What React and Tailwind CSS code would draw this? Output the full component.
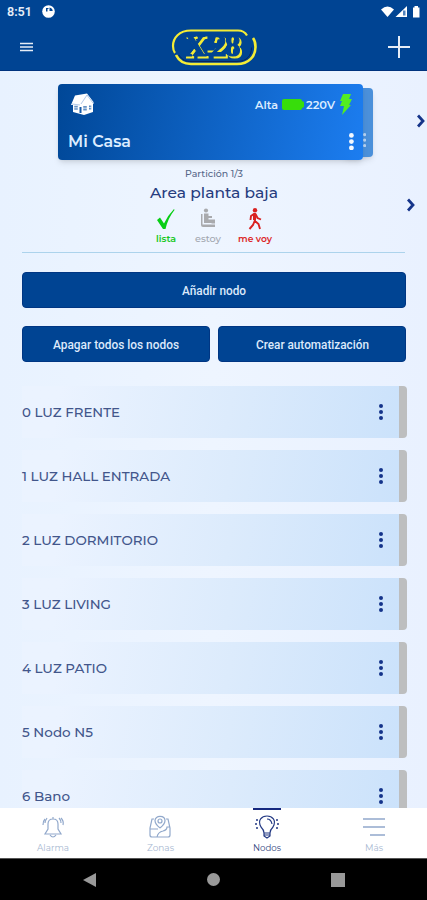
import React from 'react';

const NODES = ['0 LUZ FRENTE', '1 LUZ HALL ENTRADA', '2 LUZ DORMITORIO', '3 LUZ LIVING', '4 LUZ PATIO', '5 Nodo N5', '6 Bano'];
const WIDTHS = [98, 148, 136, 89, 85, 71, 48];

function Label({ width, size, children, weight = 500, color = '#2f4784', className = '', font = "Montserrat, Inter, sans-serif" }) {
  return (
    <svg width={width} height={size * 1.5} className={`block shrink-0 overflow-visible ${className}`}>
      <text x="0" y={size * 1.1} textLength={width} lengthAdjust="spacingAndGlyphs" fontSize={size} fontWeight={weight} fill={color} fontFamily={font}>{children}</text>
    </svg>
  );
}

function Dots({ color, r = 2, gap = 6 }) {
  return (
    <svg width={r * 2} height={gap * 2 + r * 2} fill={color} className="shrink-0">
      <circle cx={r} cy={r} r={r} />
      <circle cx={r} cy={r + gap} r={r} />
      <circle cx={r} cy={r + gap * 2} r={r} />
    </svg>
  );
}

function Logo() {
  return (
    <svg width="86" height="40" viewBox="0 0 86 40" fill="none">
      <path d="M76 8.500C74 5 71 3.500 67 3.500H20C8 3.500 2 11 2 19c0 3 .5 5 2 7" stroke="#f4ec35" strokeWidth="2.200" />
      <path d="M5 28c3 6 8 9 15 9h46c12 0 18.500-8 18.500-17 0-4-1-7-2.500-9" stroke="#f4ec35" strokeWidth="2.600" />
      <path d="M8 28c3 5 7 6.500 12 6.500h46c10 0 14.500-6 14.500-14" stroke="#07255f" strokeWidth="1" />
      <text x="13 34 40 54" y="29" fontFamily="Liberation Serif, serif" fontSize="31" fontWeight="700" fill="#004493" stroke="#004493" strokeWidth="1.200" className="drop-shadow-[2.5px_2px_0_#f4ec35]">X-28</text>
    </svg>
  );
}

function Header() {
  return (
    <header className="h-[71px] shrink-0 border-b border-[#00337e] bg-[#004493]">
      <div className="flex h-6 items-center pl-[7px] pr-[6px]">
        <Label width={25} size={12} weight={600} color="#e6edf7" font="Roboto, sans-serif">8:51</Label>
        <svg width="13" height="13" viewBox="0 0 13 13" className="ml-[10px] -mt-px">
          <circle cx="6.500" cy="6.500" r="6.300" fill="#fff" />
          <path d="M4 3h2.500v1H5.500v2.500H4zM7.500 2.500c2 .3 3.200 1.800 3.200 3.500H7.500z" fill="#004493" />
        </svg>
        <svg width="40" height="14" viewBox="0 0 40 14" fill="#fff" className="ml-auto">
          <path d="M0 4.500Q6.500-1.500 13 4.500L6.500 12z" />
          <path d="M14.500 12 26 1v11z" /><path d="M22 5.500h2.500v5H22z" fill="#5283bd" />
          <path d="M32 2.500h1.500V1H37v1.500h1.500V12.500H32z" />
        </svg>
      </div>
      <div className="flex h-[45px] items-center">
        <svg width="13" height="11" className="ml-5 mt-[2px]" stroke="#e6edf7" strokeWidth="1.600"><path d="M0 1.500h13M0 5h13M0 8.500h13" /></svg>
        <div className="ml-[138px]"><Logo /></div>
        <svg width="22" height="22" className="ml-[131px]" stroke="#e6edf7" strokeWidth="2"><path d="M0 11h22M11 0v22" /></svg>
      </div>
    </header>
  );
}

function House() {
  return (
    <svg width="23" height="22" viewBox="0 0 23 22" className="overflow-visible">
      <path d="M4 2.500 16 .5 22.500 9v2H22v8l-9 3-11-3v-7H0z" fill="#fff" />
      <path d="m10 11 6-9 6 8M1 11l8 1" stroke="#8fb2de" strokeWidth=".7" fill="none" />
      <path d="M3.500 12.800h3v4h-3zM8.500 14h2v6h-2zM12.500 13h3v4.500h-3zM18 12.500h2.200v4H18z" fill="#1459a7" />
      <path d="M5 12v5M3 14.800h4M14 13v5M12 15.200h4M19.100 12v5M17.500 14.500h3" stroke="#fff" strokeWidth=".7" />
    </svg>
  );
}

function HouseCard() {
  return (
    <div className="relative ml-[58px] mt-[13px] flex h-[76px] w-[315px] shrink-0">
      <div className="absolute right-0 top-[4px] flex h-[69px] w-[30px] items-end justify-end rounded-[4px] bg-[#4b90da] pb-[10px] pr-[7px] shadow-md"><Dots color="#b7d3f3" r={1.6} gap={5.5} /></div>
      <div className="relative flex h-[76px] w-[305px] flex-col rounded-[4px] bg-linear-[100deg] from-[#004797] to-[#1c7df0] shadow-md">
        <div className="flex h-[40px] items-center pl-[13px] pr-[10px]">
          <House />
          <Label width={23} size={11.5} weight={600} color="#dcecff" className="ml-[161px] mt-[2px]">Alta</Label>
          <svg width="23" height="11" viewBox="0 0 23 11" className="ml-[4px] mt-[1px]" fill="#37dd0b"><path d="M2 0h16q2 0 2 2l2 1v5l-2 1q0 2-2 2H2Q0 11 0 9V2q0-2 2-2" /></svg>
          <Label width={29} size={11.5} weight={600} color="#dcecff" className="ml-[1px] mt-[2px]">220V</Label>
          <svg width="14" height="22" viewBox="0 0 14 22" className="ml-[4px]" fill="#53ed23"><path d="M4 1h8l-2 5h3l-3 6h2L3 22l2-9H1l2-5H1z" /></svg>
        </div>
        <div className="flex items-center justify-between pl-[10px] pr-[9px] pt-[5px]">
          <Label width={63} size={16.5} weight={600} color="#dcecff">Mi Casa</Label>
          <Dots color="#f3f8ff" r={2.4} gap={6.2} />
        </div>
      </div>
      <svg width="8" height="14" className="absolute left-[359px] top-[30px]" fill="none" stroke="#15348a" strokeWidth="2.800"><path d="m1 1.500 5 5.500-5 5.500" /></svg>
    </div>
  );
}

function Partition() {
  return (
    <section className="mx-[22px] mt-[7px] flex h-[86px] shrink-0 flex-col items-center border-b border-[#acd3ec]">
      <Label width={58} size={9.5} color="#576889">Partición 1/3</Label>
      <div className="flex h-[22px] w-full items-start justify-center">
        <Label width={128} size={15.5} weight={500} color="#263c7e">Area planta baja</Label>
      </div>
      <div className="mt-[5px] flex w-full pl-[134px]">
        <div className="flex w-[20px] flex-col items-center">
          <svg width="18" height="22" viewBox="0 0 18 22" fill="#08ce15"><path d="m0 12 3-2.500 4 6Q11 7 17 1l.500 1Q11 10 8.500 21H6z" /></svg>
          <Label width={20} size={9.5} weight={600} color="#16c91d" className="mt-[2px]">lista</Label>
        </div>
        <div className="ml-[19px] flex w-[26px] flex-col items-center">
          <svg width="16" height="22" viewBox="0 0 16 22" fill="#a9aaad"><circle cx="6" cy="2.500" r="2.100" /><path d="M1 6h1.500v10.500H15V19H3q-2 0-2-2zM4 5.500h4.500V8H12v2H8.500v1.500H15v4h-3.500V15H4z" /></svg>
          <Label width={26} size={9.5} weight={500} color="#a2a7af" className="mt-[2px]">estoy</Label>
        </div>
        <div className="ml-[17px] flex w-[34px] flex-col items-center">
          <svg width="16" height="22" viewBox="0 0 16 22" fill="none" stroke="#d92120" strokeWidth="1.900"><circle cx="8" cy="2.200" r="2.200" fill="#d92120" stroke="none" /><path d="M8 5v8l3.500 3 1.500 5M8 12l-2 5-3.500 4M7.500 5.500 4 8l-.5 4M8.500 6l2 4 3.500 1.500" /><path d="M7.500 6v6" strokeWidth="3" /></svg>
          <Label width={34} size={9.5} weight={600} color="#dc2727" className="mt-[2px]">me voy</Label>
        </div>
      </div>
      <svg width="8" height="14" className="absolute left-[407px] top-[198px]" fill="none" stroke="#15348a" strokeWidth="2.800"><path d="m1 1.500 5 5.500-5 5.500" /></svg>
    </section>
  );
}

function ActionButton({ children, width }) {
  return <button className="flex h-[36px] flex-1 items-center justify-center rounded-[4px] border border-[#003683] bg-[#004493]"><Label width={width} size={12} weight={500} color="#dce9fb" font="Roboto, sans-serif" className="mt-px">{children}</Label></button>;
}

function NavItem({ label, width, active, children }) {
  return (
    <div className="flex flex-1 flex-col items-center">
      <div className={`h-[2px] w-7 ${active ? 'bg-[#16297f]' : ''}`} />
      <svg width="24" height="24" viewBox="0 0 24 24" className="mt-[5px]" fill="none" stroke={active ? '#243a84' : '#91a8cb'} strokeWidth="1.200">{children}</svg>
      <Label width={width} size={9.5} weight={400} color={active ? '#354780' : '#a9b9d2'} className="mt-[2px]">{label}</Label>
    </div>
  );
}

export default function App() {
  return (
    <div className="relative flex h-[900px] w-[427px] flex-col overflow-hidden bg-[#edf4ff]">
      <Header />
      <main className="flex min-h-0 flex-1 flex-col overflow-hidden bg-linear-to-r from-[#e8f2ff] via-[#eef5ff] to-[#e9f1ff]">
        <HouseCard />
        <Partition />
        <div className="ml-[22px] mr-[21px] mt-[19px] flex shrink-0"><ActionButton width={64}>Añadir nodo</ActionButton></div>
        <div className="ml-[22px] mr-[21px] mt-[18px] flex shrink-0 gap-2"><ActionButton width={126}>Apagar todos los nodos</ActionButton><ActionButton width={113}>Crear automatización</ActionButton></div>
        <div className="ml-[22px] mr-[20px] mt-[24px] flex shrink-0 flex-col gap-[12px]">
          {NODES.map((node, i) => (
            <div key={node} className="flex h-[52px] items-center rounded-r-[4px] border-r-[8px] border-[#bdbebf] bg-linear-100 from-[#ebf3ff] from-10% via-[#dcebfc] via-55% to-[#cbe2fb] pr-[16px]">
              <Label width={WIDTHS[i]} size={13} weight={500} color="#42568b" className="mt-[2px]">{node}</Label>
              <div className="ml-auto"><Dots color="#14338a" r={2} gap={6} /></div>
            </div>
          ))}
        </div>
      </main>
      <nav className="flex h-[50px] shrink-0 bg-white">
        <NavItem label="Alarma" width={32}><path d="M4 19h16l-3-5V9q0-5-5-5T7 9v5zM12 4V2M9 20q3 4 6 0M4 4Q2 6 2 10M6 3Q4 6 4 8M18 3q2 2 2 5M20 3q3 3 2 7" /></NavItem>
        <NavItem label="Zonas" width={27}><path d="M6 4H4L2 13v7q0 2 2 2h16q2 0 2-2v-7L20 4h-2M2 14h8M9 22q1-5 6-6 4-1 4-4h3M12 13Q7 9 7 5.500C7 0 17 0 17 5.500 17 9 12 13 12 13" /><circle cx="12" cy="6" r="2" /></NavItem>
        <NavItem label="Nodos" width={28} active><path d="M9 18Q9 15 6 12C2 5 7 1 12 1s10 4 6 11q-3 3-3 6zM9 18v3l3 2 3-2v-3M9 20h6M12 4q4 0 5 5" /><path d="M1 5h2M0 9h2M1 13h2M21 5h2M22 9h2M21 13h2" strokeWidth="1.700" /></NavItem>
        <NavItem label="Más" width={18}><path d="M1 4h22M1 12h22M8 20h15" strokeWidth="1.500" /></NavItem>
      </nav>
      <div className="flex h-[42px] shrink-0 items-center border-t border-[#555] bg-black">
        <svg width="13" height="14" className="ml-[83px]" fill="#999"><path d="M0 7 13 0v14z" /></svg>
        <div className="ml-[111px] h-[13px] w-[13px] rounded-full bg-[#999]" />
        <div className="ml-[111px] h-[14px] w-[14px] bg-[#999]" />
      </div>
    </div>
  );
}
